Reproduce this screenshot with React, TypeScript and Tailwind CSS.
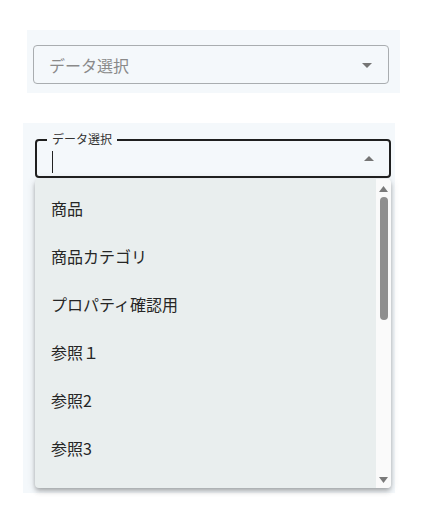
import React from "react";

const items = ["商品", "商品カテゴリ", "プロパティ確認用", "参照１", "参照2", "参照3"];

const Caret: React.FC<{ up?: boolean }> = ({ up }) => (
  <svg width="24" height="24" viewBox="0 0 24 24" className="shrink-0">
    <path d={up ? "M7 14l5-5 5 5z" : "M7 10l5 5 5-5z"} fill="#757575" />
  </svg>
);

const App: React.FC = () => {
  return (
    <div
      className="w-full h-[508px] bg-white overflow-hidden"
      style={{ fontFamily: '"Noto Sans CJK JP", "Noto Sans", sans-serif' }}
    >
      {/* closed select */}
      <section className="ml-[27px] mt-[30px] w-[373px] h-[63px] bg-[#f4f8fb] pl-[6px] pt-[15px]">
        <div className="w-[356px] h-[39px] border border-[#a9adb0] rounded-[4px] flex items-center pl-[15px] pr-[9px]">
          <span className="flex-1 text-[16px] text-[#8a8a8a] leading-none">データ選択</span>
          <Caret />
        </div>
      </section>

      {/* open select */}
      <section className="ml-[23px] mt-[30px] w-[372px] h-[370px] bg-[#f4f8fb] pl-[12px] pt-[16px]">
        <div className="relative w-[356px] h-[39px] border-2 border-[#1f1f1f] rounded-[4px] flex items-center pl-[15px] pr-[8px]">
          <span className="absolute left-[10px] -top-[10px] px-[5px] bg-[#f4f8fb] text-[12px] leading-[16px] text-[#333]">
            データ選択
          </span>
          <div className="flex-1 h-full flex items-center">
            <div className="w-px h-[22px] bg-[#222] mt-[7px]" />
          </div>
          <Caret up />
        </div>

        <div className="w-[356px] h-[309px] mt-px rounded-[4px] bg-[#e9eeee] flex overflow-hidden shadow-[0_2px_4px_-1px_rgba(0,0,0,0.2),0_4px_5px_0_rgba(0,0,0,0.14),0_1px_10px_0_rgba(0,0,0,0.12)]">
          <ul className="flex-1 pt-[5px]">
            {items.map((item) => (
              <li key={item} className="h-[48px] flex items-center pl-[16px] text-[16px] text-[#262626]">
                {item}
              </li>
            ))}
          </ul>
          <div className="w-[15px] bg-[#fafafa] flex flex-col items-center pt-[7px] pb-[5px]">
            <svg width="9" height="6" viewBox="0 0 9 6">
              <path d="M0 6L4.5 0 9 6z" fill="#7a7a7a" />
            </svg>
            <div className="mt-[5px] w-[8px] h-[123px] rounded-full bg-[#8f8f8f]" />
            <div className="flex-1" />
            <svg width="9" height="6" viewBox="0 0 9 6">
              <path d="M0 0L4.5 6 9 0z" fill="#7a7a7a" />
            </svg>
          </div>
        </div>
      </section>
    </div>
  );
};

export default App;
